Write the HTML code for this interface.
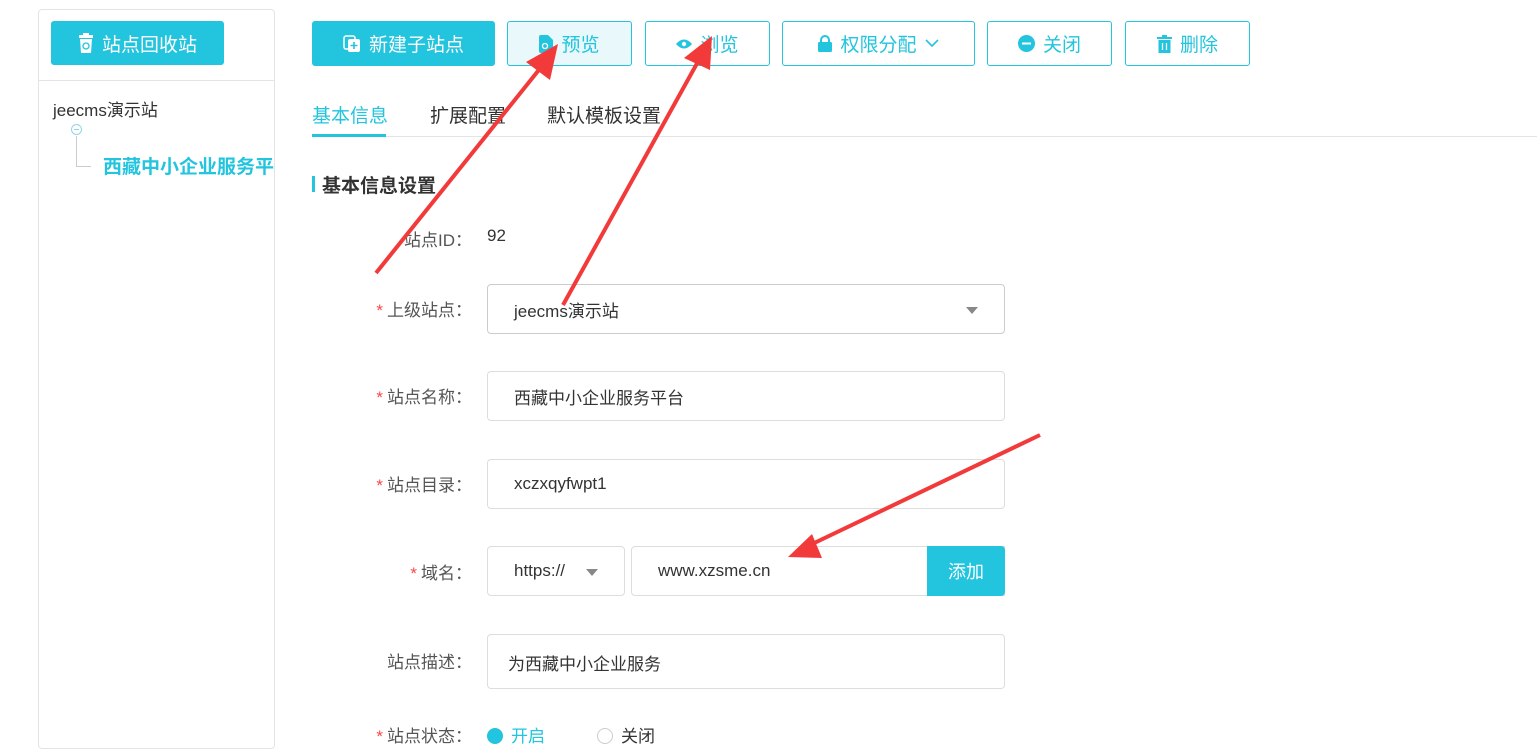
<!DOCTYPE html>
<html><head><meta charset="utf-8"><style>
*{box-sizing:border-box;margin:0;padding:0}
body{width:1537px;height:732px;overflow:hidden;background:#fff;font-family:"Liberation Sans","Noto Sans CJK SC",sans-serif;color:#333;position:relative}
.a{position:absolute}
.btn{position:absolute;top:21px;height:45px;border:1px solid #22c4de;border-radius:3px;color:#22c4de;font-size:19px;display:flex;align-items:center;justify-content:center;gap:8px;background:#fff}
.fill{background:#22c4de;color:#fff}
.lbl{position:absolute;width:200px;left:272px;text-align:right;font-size:17px;color:#555}
.lbl b{color:#f44;font-weight:normal;margin-right:4px}
.inp{position:absolute;border:1px solid #ddd;border-radius:4px;font-size:17px;color:#333;display:flex;align-items:center;padding-left:26px}
.tri{width:0;height:0;border-left:6px solid transparent;border-right:6px solid transparent;border-top:7px solid #888;position:absolute}
</style></head><body>
<div class="a" style="left:38px;top:9px;width:237px;height:740px;border:1px solid #e4e4e4;border-radius:4px"></div>
<div class="a" style="left:38px;top:80px;width:237px;height:1px;background:#e4e4e4"></div>
<div class="btn fill" style="left:51px;width:173px;height:44px;border-radius:3px">
<svg width="16" height="20" viewBox="0 0 16 20"><rect x="1" y="2" width="14" height="3" fill="#fff"/><rect x="5" y="0" width="6" height="3" fill="#fff"/><path d="M2 6h12l-1 14H3z" fill="#fff"/><circle cx="8" cy="13" r="3" fill="none" stroke="#22c4de" stroke-width="1.3"/></svg>站点回收站</div>
<div class="a" style="left:53px;top:96px;font-size:17px;color:#333">jeecms演示站</div>
<div class="a" style="left:71px;top:124px;width:11px;height:11px;border:1px solid #8fd4e6;border-radius:50%"></div>
<div class="a" style="left:74px;top:129px;width:5px;height:1px;background:#8fd4e6"></div>
<div class="a" style="left:76px;top:136px;width:1px;height:30px;background:#ccc"></div>
<div class="a" style="left:76px;top:166px;width:15px;height:1px;background:#ccc"></div>
<div class="a" style="left:103px;top:152px;font-size:19px;font-weight:bold;color:#22c4de;white-space:nowrap;width:171px;overflow:hidden">西藏中小企业服务平台</div>

<div class="btn fill" style="left:312px;width:183px"><svg width="18" height="18" viewBox="0 0 18 18"><rect x="1" y="1" width="11" height="13" rx="2" fill="none" stroke="#fff" stroke-width="1.5"/><rect x="5" y="4" width="12" height="13" rx="2" fill="#fff"/><path d="M11 7v7M7.5 10.5h7" stroke="#22c4de" stroke-width="1.6"/></svg>新建子站点</div>
<div class="btn" style="left:507px;width:125px;background:#e8f8fb"><svg width="14" height="18" viewBox="0 0 14 18"><path d="M0 2a2 2 0 0 1 2-2h7l5 5v11a2 2 0 0 1-2 2H2a2 2 0 0 1-2-2z" fill="#22c4de"/><circle cx="6" cy="11" r="2.5" fill="none" stroke="#fff" stroke-width="1.3"/></svg>预览</div>
<div class="btn" style="left:645px;width:125px"><svg width="16" height="10" viewBox="0 0 16 10"><path d="M0 5Q8-4 16 5Q8 14 0 5z" fill="#22c4de"/><circle cx="8" cy="5" r="2.2" fill="#fff"/></svg>浏览</div>
<div class="btn" style="left:782px;width:193px"><svg width="14" height="17" viewBox="0 0 14 17"><path d="M3 8V5a4 4 0 0 1 8 0v3" fill="none" stroke="#22c4de" stroke-width="2"/><rect x="0" y="7" width="14" height="10" rx="1.5" fill="#22c4de"/></svg>权限分配 <svg width="14" height="9" viewBox="0 0 14 9"><path d="M1 1l6 6 6-6" fill="none" stroke="#22c4de" stroke-width="1.6"/></svg></div>
<div class="btn" style="left:987px;width:125px"><svg width="17" height="17"><circle cx="8.5" cy="8.5" r="8.5" fill="#22c4de"/><rect x="4" y="7.5" width="9" height="2" fill="#fff"/></svg>关闭</div>
<div class="btn" style="left:1125px;width:125px"><svg width="15" height="18" viewBox="0 0 15 18"><rect x="0" y="2" width="15" height="2" fill="#22c4de"/><rect x="5" y="0" width="5" height="2" fill="#22c4de"/><path d="M1.5 5h12v13h-12z" fill="#22c4de"/><path d="M5.5 8v7M9.5 8v7" stroke="#fff" stroke-width="1.3"/></svg>删除</div>

<div class="a" style="left:312px;top:101px;font-size:19px;color:#22c4de">基本信息</div>
<div class="a" style="left:430px;top:101px;font-size:19px;color:#333">扩展配置</div>
<div class="a" style="left:547px;top:101px;font-size:19px;color:#333">默认模板设置</div>
<div class="a" style="left:312px;top:136px;width:1225px;height:1px;background:#e4e4e4"></div>
<div class="a" style="left:312px;top:134px;width:74px;height:3px;background:#22c4de"></div>
<div class="a" style="left:312px;top:176px;width:3px;height:16px;background:#22c4de"></div>
<div class="a" style="left:322px;top:171px;font-size:19px;font-weight:bold;color:#333">基本信息设置</div>

<div class="lbl" style="top:226px">站点ID：</div>
<div class="a" style="left:487px;top:226px;font-size:17px">92</div>
<div class="lbl" style="top:296px"><b>*</b>上级站点：</div>
<div class="inp" style="left:487px;top:284px;width:518px;height:50px;border-color:#ccc">jeecms演示站<div class="tri" style="left:478px;top:22px"></div></div>
<div class="lbl" style="top:383px"><b>*</b>站点名称：</div>
<div class="inp" style="left:487px;top:371px;width:518px;height:50px">西藏中小企业服务平台</div>
<div class="lbl" style="top:471px"><b>*</b>站点目录：</div>
<div class="inp" style="left:487px;top:459px;width:518px;height:50px">xczxqyfwpt1</div>
<div class="lbl" style="top:559px"><b>*</b>域名：</div>
<div class="inp" style="left:487px;top:546px;width:138px;height:50px">https://<div class="tri" style="left:98px;top:22px"></div></div>
<div class="inp" style="left:631px;top:546px;width:374px;height:50px;border-radius:4px 0 0 4px">www.xzsme.cn</div>
<div class="a" style="left:927px;top:546px;width:78px;height:50px;background:#22c4de;color:#fff;font-size:18px;display:flex;align-items:center;justify-content:center;border-radius:0 4px 4px 0">添加</div>
<div class="lbl" style="top:648px">站点描述：</div>
<div class="inp" style="left:487px;top:634px;width:518px;height:55px;padding-left:20px;align-items:flex-start;padding-top:15px">为西藏中小企业服务</div>
<div class="lbl" style="top:722px"><b>*</b>站点状态：</div>
<div class="a" style="left:487px;top:728px;width:16px;height:16px;border-radius:50%;background:#22c4de"></div>
<div class="a" style="left:511px;top:722px;font-size:17px;color:#22c4de">开启</div>
<div class="a" style="left:597px;top:728px;width:16px;height:16px;border-radius:50%;border:1px solid #ccc"></div>
<div class="a" style="left:621px;top:722px;font-size:17px">关闭</div>

<svg class="a" style="left:0;top:0" width="1537" height="732">
<g fill="#f23a3a" stroke="#f23a3a">
<line x1="376" y1="273" x2="542" y2="66" stroke-width="4"/>
<polygon points="558,44 526,62 550,80" stroke="none"/>
<line x1="563" y1="305" x2="700" y2="58" stroke-width="4"/>
<polygon points="712,36 684,58 710,70" stroke="none"/>
<line x1="1040" y1="435" x2="808" y2="546" stroke-width="4"/>
<polygon points="788,557 812,534 822,558" stroke="none"/>
</g></svg>
</body></html>
